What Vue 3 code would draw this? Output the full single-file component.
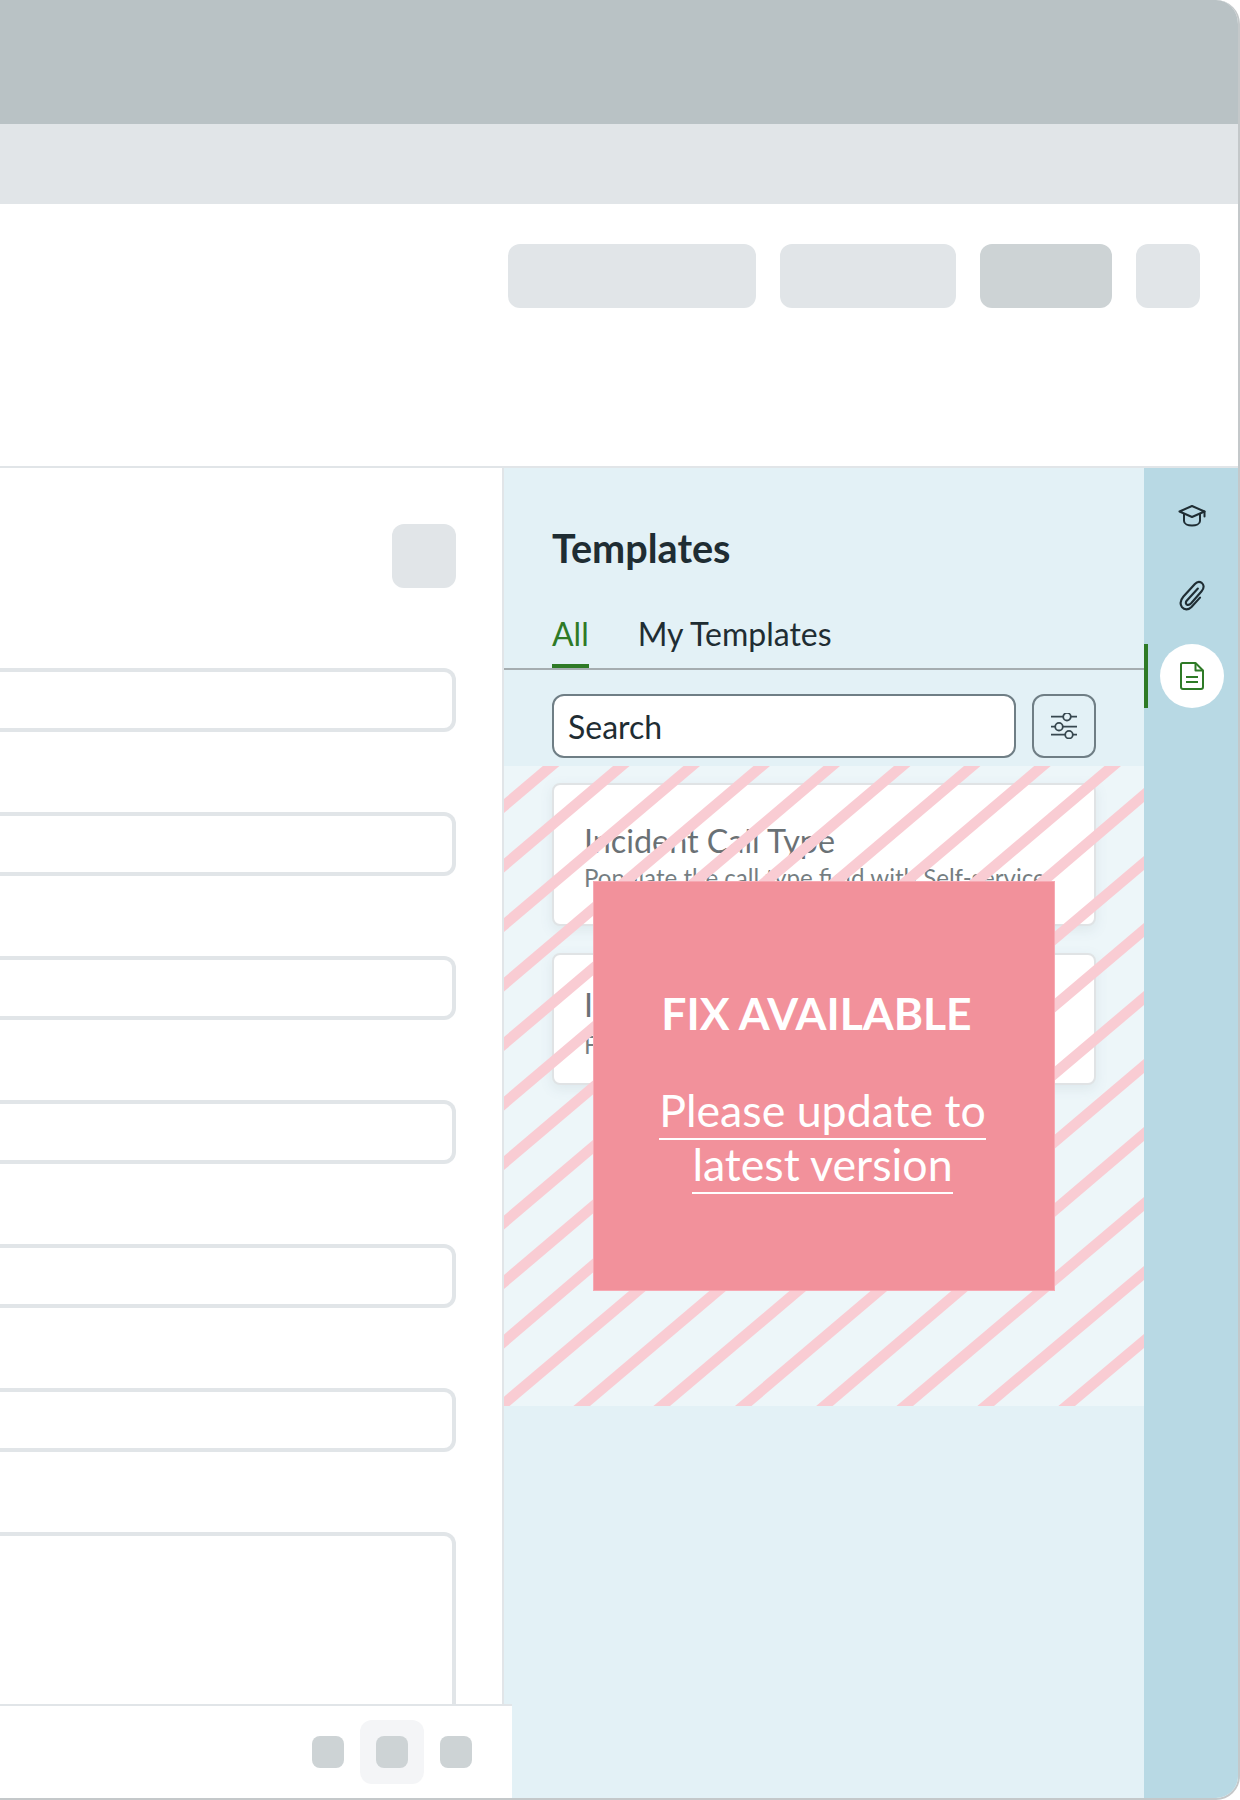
<script setup>
const fields = [1, 2, 3, 4, 5, 6]
const tools = [1, 2, 3]

// Lower edge of each hazard stripe, in the 640×640 striped area.
const edges = [
  [0, 47, 55.4, 0], [0, 106.5, 125.6, 0], [0, 166, 196, 0], [0, 225.5, 266, 0],
  [0, 285, 336, 0], [0, 344.5, 406.500, 0], [0, 404, 476.500, 0], [0, 463.5, 546.700, 0],
  [0, 523, 617, 0], [0, 582.5, 640, 36],
  [5.5, 640, 640, 104], [86, 640, 640, 171], [166, 640, 640, 239], [247.5, 640, 640, 307],
  [328.6, 640, 640, 375], [409, 640, 640, 445], [490, 640, 640, 514], [571, 640, 640, 582]
]
const stripes = edges.map(([x1, y1, x2, y2]) => {
  const dx = x2 - x1
  const dy = y2 - y1
  return { x1: x1 - dx * 0.2, y1: y1 - dy * 0.2 - 7, x2: x2 + dx * 0.2, y2: y2 + dy * 0.2 - 7 }
})
</script>

<template>
  <div class="frame">
    <div class="top-bar"></div>
    <div class="sub-bar"></div>
    <div class="toolbar">
      <span class="btn b1"></span>
      <span class="btn b2"></span>
      <span class="btn b3"></span>
      <span class="btn b4"></span>
    </div>
    <div class="body">
      <div class="form">
        <div class="form-inner">
          <span class="form-btn"></span>
          <div v-for="f in fields" :key="f" class="field"></div>
          <div class="area"></div>
        </div>
        <div class="footer">
          <span v-for="t in tools" :key="t" class="tool" :class="{ active: t === 2 }"><i></i></span>
        </div>
      </div>
      <div class="panel">
        <h2 class="title">Templates</h2>
        <div class="tabs">
          <span class="tab on">All</span>
          <span class="tab">My Templates</span>
        </div>
        <div class="search-row">
          <div class="search">Search</div>
          <div class="filter">
            <svg width="26" height="26" viewBox="0 0 26 26" fill="none" stroke="#37474f" stroke-width="1.8">
              <path d="M0 3.700h12M20 3.700h6M0 13.700h4M12 13.700h14M0 21.700h14M22 21.700h4" />
              <circle cx="16" cy="3.700" r="3.800" />
              <circle cx="8" cy="13.700" r="3.800" />
              <circle cx="18" cy="21.700" r="3.800" />
            </svg>
          </div>
        </div>
        <div class="cards">
          <div class="card c1">
            <div class="card-title">Incident Call Type</div>
            <div class="card-sub">Populate the call type field with Self-service</div>
          </div>
          <div class="card c2">
            <div class="card-title">Incident Priority</div>
            <div class="card-sub">Fill the priority field</div>
          </div>
          <svg class="stripes" width="640" height="640" viewBox="0 0 640 640">
            <line
              v-for="(s, i) in stripes"
              :key="i"
              :x1="s.x1"
              :y1="s.y1"
              :x2="s.x2"
              :y2="s.y2"
              stroke="#f9ccd3"
              stroke-width="10.700"
            />
          </svg>
          <div class="notice">
            <div class="notice-title">FIX AVAILABLE</div>
            <a class="notice-link"><span>Please update to</span><span>latest version</span></a>
          </div>
        </div>
      </div>
      <div class="rail">
        <span class="rail-btn">
          <svg width="28" height="24" viewBox="0 0 28 24" fill="none" stroke="#1f2d33" stroke-width="2" stroke-linejoin="round" stroke-linecap="round">
            <path d="M14 2 1.500 7.500 14 13l12.500-5.500z" />
            <path d="M6 10v7c0 3 4 4.500 8 4.500s8-1.500 8-4.500v-7" />
            <path d="M26.500 7.500v5" />
          </svg>
        </span>
        <span class="rail-btn">
          <svg width="28" height="32" viewBox="0 0 26 30" fill="none" stroke="#1f2d33" stroke-width="2" stroke-linecap="round" stroke-linejoin="round">
            <path d="M18.500 8 8 19.500c-1.500 1.800-.5 3.600.7 3.800 1.400.3 2.500-.4 3.500-1.500L22 10.500c3-3.400 1.800-6.500.2-7.700-2-1.400-4.600-1.100-6.500 1L5 15.500C2 19 1.500 22.500 3.600 25.500c2.200 2.800 6 2.800 8.900-.2l8-8.800" />
          </svg>
        </span>
        <span class="rail-btn current">
          <svg width="24" height="28" viewBox="0 0 24 28" fill="none" stroke="#2e7a26" stroke-width="2" stroke-linejoin="round">
            <path d="M2.500 1h13L23 8.500V25a2 2 0 0 1-2 2H3a2 2 0 0 1-2-2V2.500A1.500 1.500 0 0 1 2.500 1z" />
            <path d="M15.500 1v7.500H23" />
            <path d="M6 15h12M6 20h12" />
          </svg>
        </span>
      </div>
    </div>
  </div>
</template>

<style>
html, body { margin: 0; background: #fff; }
</style>

<style scoped>
.frame {
  width: 1240px;
  height: 1800px;
  box-sizing: border-box;
  display: flex;
  flex-direction: column;
  overflow: hidden;
  background: #fff;
  border-right: 2px solid #c4c8ca;
  border-bottom: 2px solid #c4c8ca;
  border-top-right-radius: 24px;
  border-bottom-right-radius: 24px;
  font-family: Lato, "Liberation Sans", sans-serif;
}
.top-bar { height: 124px; background: #b9c2c5; flex: none; }
.sub-bar { height: 80px; background: #e1e5e8; flex: none; }
.toolbar {
  height: 264px;
  box-sizing: border-box;
  flex: none;
  display: flex;
  justify-content: flex-end;
  gap: 24px;
  padding: 40px 38px 0 0;
  border-bottom: 2px solid #e1e5e8;
}
.btn { height: 64px; border-radius: 12px; background: #e1e5e8; }
.b1 { width: 248px; }
.b2 { width: 176px; }
.b3 { width: 132px; background: #cdd3d5; }
.b4 { width: 64px; }
.body { flex: 1; display: flex; min-height: 0; }
.form {
  width: 502px;
  flex: none;
  position: relative;
  display: flex;
  flex-direction: column;
  border-right: 2px solid #e1e5e8;
  box-sizing: content-box;
}
.form-inner {
  flex: 1;
  display: flex;
  flex-direction: column;
  align-items: flex-end;
  padding: 56px 46px 0 0;
  min-height: 0;
  overflow: hidden;
}
.form-btn {
  width: 64px;
  height: 64px;
  border-radius: 12px;
  background: #e1e5e8;
  margin-bottom: 80px;
  flex: none;
}
.field {
  width: 100%;
  height: 64px;
  box-sizing: border-box;
  flex: none;
  margin-bottom: 80px;
  border: 4px solid #e1e5e8;
  border-left: 0;
  border-radius: 0 12px 12px 0;
}
.area {
  width: 100%;
  height: 260px;
  box-sizing: border-box;
  flex: none;
  border: 4px solid #e1e5e8;
  border-left: 0;
  border-radius: 0 12px 0 0;
}
.footer {
  position: absolute;
  left: 0;
  bottom: 0;
  width: 512px;
  height: 94px;
  box-sizing: border-box;
  background: #fff;
  border-top: 2px solid #e1e5e8;
  display: flex;
  align-items: center;
  padding: 0 0 0 312px;
  z-index: 2;
}
.tool { width: 32px; height: 32px; margin-right: 32px; position: relative; flex: none; }
.tool i { position: absolute; inset: 0; background: #cdd3d5; border-radius: 8px; }
.tool.active::before {
  content: "";
  position: absolute;
  inset: -16px;
  background: #f4f5f7;
  border-radius: 12px;
}
.panel { flex: 1; min-width: 0; background: #e3f1f6; position: relative; }
.title {
  margin: 0;
  padding: 58px 0 0 48px;
  font-size: 39.600px;
  line-height: 44px;
  font-weight: 700;
  color: #1f2d33;
}
.tabs {
  margin-top: 40px;
  height: 60px;
  box-sizing: border-box;
  border-bottom: 2px solid #a5adb0;
  display: flex;
  gap: 49px;
  padding-left: 48px;
}
.tab {
  font-size: 32px;
  line-height: 48px;
  height: 58px;
  box-sizing: border-box;
  color: #1f2d33;
}
.tab.on { color: #2e7a26; border-bottom: 4px solid #2e7a26; }
.search-row {
  display: flex;
  gap: 16px;
  padding: 24px 48px 0;
}
.search {
  width: 464px;
  height: 64px;
  box-sizing: border-box;
  border: 2px solid #6f7e85;
  border-radius: 12px;
  background: #fff;
  font-size: 32px;
  line-height: 62px;
  padding-left: 14px;
  color: #1f2d33;
}
.filter {
  width: 64px;
  height: 64px;
  box-sizing: border-box;
  border: 2px solid #6f7e85;
  border-radius: 12px;
  display: flex;
  align-items: center;
  justify-content: center;
}
.cards {
  position: relative;
  height: 640px;
  margin-top: 8px;
  padding: 17px 48px 0 48px;
  box-sizing: border-box;
}
.card {
  background: #fff;
  border: 2px solid #cfd5d8;
  border-radius: 8px;
  box-shadow: 0 4px 12px rgba(100, 130, 140, 0.18);
  padding: 36px 30px 0;
  box-sizing: border-box;
  overflow: hidden;
  white-space: nowrap;
}
.c1 { height: 143px; margin-bottom: 27px; }
.c2 { height: 132px; padding-top: 30px; }
.c2 .card-sub { margin-top: 3px; }
.card-title { font-size: 32.300px; line-height: 40px; color: #1a262b; }
.card-sub { font-size: 24.100px; line-height: 34px; color: #2c3a40; margin-top: 0; }
.stripes {
  position: absolute;
  left: 0;
  top: 0;
  display: block;
  background: rgba(255, 255, 255, 0.35);
}
.notice {
  position: absolute;
  left: 89px;
  top: 115px;
  width: 462px;
  height: 410px;
  box-sizing: border-box;
  background: #f2919b;
  border: 1px solid #f7a9b3;
  color: #fff;
  padding: 103px 0 0;
  text-align: center;
}
.notice-title {
  font-size: 44.500px;
  line-height: 56px;
  font-weight: 700;
  margin-right: 15px;
}
.notice-link {
  display: flex;
  flex-direction: column;
  align-items: center;
  margin-top: 45px;
  margin-right: 3px;
  font-size: 44.700px;
  line-height: 48px;
}
.notice-link span { border-bottom: 2px solid #fff; height: 54px; box-sizing: border-box; }
.rail {
  width: 94px;
  flex: none;
  box-sizing: border-box;
  background: #b8d9e4;
  display: flex;
  flex-direction: column;
  align-items: center;
  padding: 16px 0 0 2px;
  gap: 16px;
}
.rail-btn {
  width: 64px;
  height: 64px;
  border-radius: 50%;
  display: flex;
  align-items: center;
  justify-content: center;
  position: relative;
  flex: none;
}
.rail-btn.current { background: #fff; }
.rail-btn.current::before {
  content: "";
  position: absolute;
  left: -16px;
  top: 0;
  width: 4px;
  height: 64px;
  background: #2e7a26;
}
</style>
